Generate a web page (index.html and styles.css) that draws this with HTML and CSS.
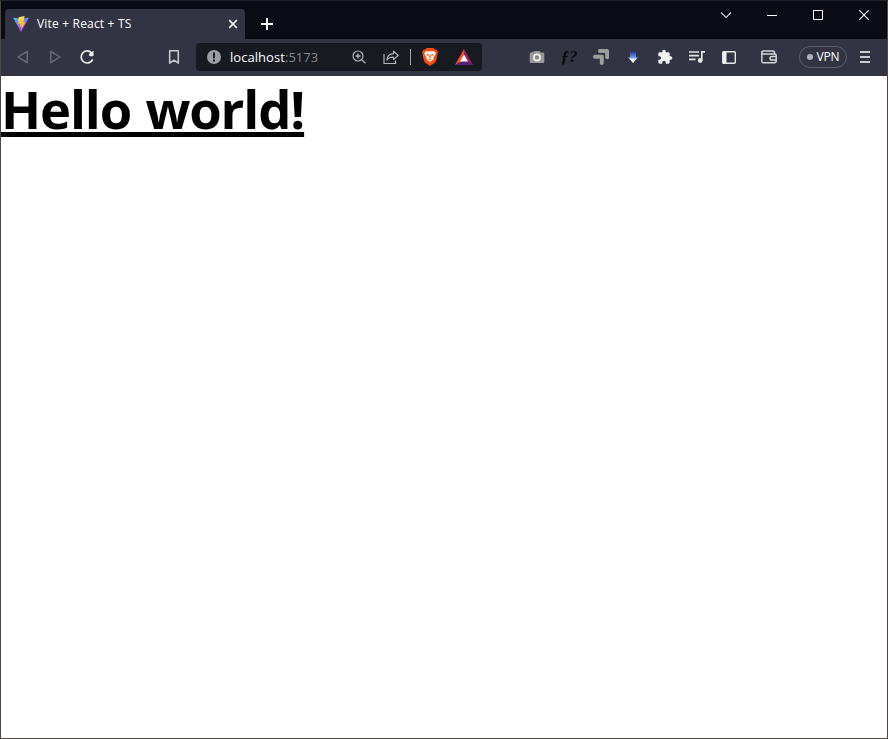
FILE: index.html
```html
<!DOCTYPE html>
<html lang="en">
<head>
<meta charset="utf-8">
<title>Vite + React + TS</title>
<link rel="stylesheet" href="styles.css">
</head>
<body>
<div class="window">
  <header class="titlebar">
    <div class="tab">
      <svg class="favicon" width="18" height="18" viewBox="0 0 18 18">
        <defs>
          <linearGradient id="vite" x1="0" y1="0" x2=".6" y2="1"><stop offset="0" stop-color="#41c8ff"/><stop offset="1" stop-color="#b52cff"/></linearGradient>
          <linearGradient id="bolt" x1="0" y1="0" x2="0" y2="1"><stop offset="0" stop-color="#ffe257"/><stop offset="1" stop-color="#ffa800"/></linearGradient>
        </defs>
        <path d="M1 2.5 9 4l8-1.5-8 14.8z" fill="url(#vite)"/>
        <path d="m12.6 1-6 1.2-.5 6.8 2.3-.4-.6 3.2 1.7-.5-.6 3.8 4.6-8-2.1.3z" fill="url(#bolt)"/>
      </svg>
      <span class="tab-title">Vite + React + TS</span>
      <svg class="tab-close" width="10" height="10" viewBox="0 0 10 10"><path d="m1.2 1.2 7.6 7.6m0-7.6L1.2 8.8" stroke="#f2f2f5" stroke-width="1.7"/></svg>
    </div>
    <svg class="new-tab" width="12" height="12" viewBox="0 0 12 12"><path d="M0 6h12M6 0v12" stroke="#fff" stroke-width="2"/></svg>
    <div class="controls">
      <span class="control"><svg width="12" height="12" viewBox="0 0 12 12"><path d="m1 3.500 5 5 5-5" fill="none" stroke="#d4d4d8" stroke-width="1.100"/></svg></span>
      <span class="control"><svg width="10" height="10" viewBox="0 0 10 10"><path d="M0 5.5h10" stroke="#fff"/></svg></span>
      <span class="control"><svg width="10" height="10" viewBox="0 0 10 10"><path d="M.5.5h9v9h-9z" fill="none" stroke="#fff"/></svg></span>
      <span class="control"><svg width="10" height="10" viewBox="0 0 10 10"><path d="m.2.2 9.6 9.6m0-9.6L.2 9.8" stroke="#fff" stroke-width="1.1"/></svg></span>
    </div>
  </header>

  <nav class="toolbar">
    <span class="slot"><svg width="16" height="16" viewBox="0 0 16 16"><path d="M12.2 2.3v11.4L3 8z" fill="none" stroke="#6b6d7c" stroke-width="1.4" stroke-linejoin="round"/></svg></span>
    <span class="slot"><svg width="16" height="16" viewBox="0 0 16 16"><path d="M3.8 2.3v11.4L13 8z" fill="none" stroke="#6b6d7c" stroke-width="1.4" stroke-linejoin="round"/></svg></span>
    <span class="slot"><svg width="16" height="16" viewBox="0 0 16 16"><path d="M13.700 10.300a6 6 0 1 1-1.200-6.500" fill="none" stroke="#ededf0" stroke-width="1.700"/><path d="M10.200 4.800 14.500 1.800v4.400c0 .6-.4 1-1 1h-2.300c-.8 0-1.200-.6-1.200-1.200z" fill="#ededf0"/></svg></span>
    <span class="slot bookmark"><svg width="16" height="16" viewBox="0 0 16 16"><path d="M3.700 1.800h8.600v12.400L8 11.200l-4.300 3z" fill="none" stroke="#c8c8cb" stroke-width="1.600" stroke-linejoin="round"/></svg></span>

    <div class="address">
      <span class="slot"><svg width="14" height="14" viewBox="0 0 14 14"><circle cx="7" cy="7" r="7" fill="#9b9da5"/><path d="M7 2.5v5.700M7 9.600v2" stroke="#17191f" stroke-width="2"/></svg></span>
      <span class="url">localhost<span class="port">:5173</span></span>
      <span class="slot"><svg width="16" height="16" viewBox="0 0 16 16"><g fill="none" stroke="#b1b3b8" stroke-width="1.200"><circle cx="7" cy="7" r="5"/><path d="m10.700 10.700 3.800 3.500"/><path d="M4.500 7h5M7 4.500v5" stroke-width="1.400"/></g></svg></span>
      <span class="slot"><svg width="16" height="16" viewBox="0 0 16 16"><path d="M1 5v9.500h11.500v-3M10.500 2.200 15.200 6.500l-4.700 4V8.200c-3 0-5.100.7-6.500 2.700.2-3.800 3-6 6.500-6.200z" fill="none" stroke="#b1b3b8" stroke-width="1.200" stroke-linejoin="round"/></svg></span>
      <span class="divider"></span>
      <span class="slot brave"><svg width="16" height="18" viewBox="0 0 16 18"><path d="M4.600 0h6.800l1.400 1.500 1.800.2L16 4.200l-.5 1.600-1.300 6.400c-.3 1.200-.9 2-1.800 2.700L8 18l-4.400-3.100c-.9-.7-1.500-1.500-1.800-2.700L.5 5.800 0 4.200l1.400-2.500 1.800-.2z" fill="#fb4c0c"/><path d="m4 3 2.300.4L8 3l1.700.4L12 3l1.800 2.400-1 2.200-1.600 2.300.3 1.500-2.200 1.400L8 14.200l-1.300-1.400-2.200-1.400.3-1.500-1.600-2.300-1-2.200z" fill="#fff"/><path d="m4.100 5.800 2.700.4-.5 2.200zm7.800 0-2.700.4.500 2.200zM5.700 10.200 8 11.100l2.300-.9L8 12.300zM7.400 7h1.200L8.800 9.400 8 10l-.8-.6z" fill="#fb4c0c"/></svg></span>
      <span class="slot"><svg width="18" height="16" viewBox="0 0 18 16"><path d="M9 0 0 16l9-5z" fill="#ff4b22"/><path d="m9 0 9 16-9-5z" fill="#9e1f63"/><path d="M0 16h18l-9-5z" fill="#4d2678"/><path d="m9 5.500 4 7H5z" fill="#fff"/></svg></span>
    </div>

    <div class="extensions">
      <span class="slot"><svg width="16" height="16" viewBox="0 0 16 16"><path d="M2 3.600h.7V2.700h2v.9L5.500 2h5L12 3.600h2q1.300 0 1.300 1.300v7.800q0 1.300-1.300 1.300H2Q.7 14 .7 12.700V4.900Q.7 3.600 2 3.600z" fill="#989898"/><circle cx="8" cy="8.400" r="4" fill="#ededed"/><circle cx="8" cy="8.400" r="2.200" fill="#888"/></svg></span>
      <span class="slot fx">ƒ?</span>
      <span class="slot"><svg width="16" height="16" viewBox="0 0 16 16"><path d="M6.800 0H14q2 0 2 2v6.800q0 1.400-1.600 1.400T12.200 9V4h-5.400Q4.900 3.900 4.900 2T6.800 0z" fill="#9c9c9c"/><path d="M1.900 5.800h6.900q2 0 2 2v6.500q0 1.600-2 1.600t-2-1.600V9.800H1.900Q0 9.700 0 7.800t1.900-2z" fill="#9c9c9c"/></svg></span>
      <span class="slot"><svg width="12" height="14" viewBox="0 0 12 14"><defs><linearGradient id="arrow" x1="0" y1="0" x2="0" y2="1"><stop offset="0" stop-color="#1c3792"/><stop offset=".5" stop-color="#6d91ee"/><stop offset=".7" stop-color="#f4f6ff"/><stop offset="1" stop-color="#fff"/></linearGradient></defs><path d="M3 1.500h6v5.700h2L6 13 1 7.200h2z" fill="url(#arrow)"/></svg></span>
      <span class="slot"><svg width="16" height="16" viewBox="0 0 24 24"><path d="M20.500 11H19V7c0-1.100-.9-2-2-2h-4V3.500a2.500 2.500 0 0 0-5 0V5H4c-1.100 0-2 .9-2 2v3.800h1.500a2.700 2.700 0 0 1 0 5.400H2V20c0 1.100.9 2 2 2h3.800v-1.500a2.700 2.700 0 0 1 5.400 0V22H17c1.100 0 2-.9 2-2v-4h1.500a2.500 2.500 0 0 0 0-5z" fill="#f1f1f3"/></svg></span>
      <span class="slot"><svg width="16" height="14" viewBox="0 0 16 14"><path d="M0 2h10M0 5.700h10M0 9.400h6.500" stroke="#e5e5e8" stroke-width="1.700"/><path d="M12.800 10V1.800H16" fill="none" stroke="#e5e5e8" stroke-width="1.700"/><circle cx="11.200" cy="10.500" r="2.400" fill="#e5e5e8"/></svg></span>
      <span class="slot"><svg width="14" height="13" viewBox="0 0 14 13"><rect x=".7" y=".7" width="12.600" height="11.600" rx="1" fill="none" stroke="#e5e5e8" stroke-width="1.400"/><path d="M1 1h3.500v11H1z" fill="#f1f1f3"/></svg></span>
    </div>
    <span class="slot wallet"><svg width="16" height="14" viewBox="0 0 16 14"><g fill="none" stroke="#d5d5d8" stroke-width="1.500"><path d="M13.500 4V2.500q0-1.500-1.500-1.500H2.500Q.8 1 .8 2.500v8.700q0 1.600 1.700 1.600h10.800q1.900 0 1.900-1.700V5.600q0-1.700-1.700-1.700H2.500Q.8 3.900.8 2.400"/><path d="M15.200 6.500H11q-2 0-2 1.800t2 1.800h4.200"/></g></svg></span>
    <span class="vpn"><span class="dot"></span>VPN</span>
    <span class="slot menu"><svg width="10" height="12" viewBox="0 0 10 12"><path d="M0 1h10M0 6h10M0 11h10" stroke="#cacacd" stroke-width="2"/></svg></span>
  </nav>

  <main class="page"><h1>Hello world!</h1></main>
</div>
</body>
</html>
```

FILE: styles.css
```css
* { box-sizing: border-box; }
body { margin: 0; background: #fff; font-family: "Open Sans", "Noto Sans", sans-serif; }
svg { display: block; flex: none; }

.window {
  height: 739px;
  border: 1px solid #504642;
  border-top-color: #202126;
  display: flex;
  flex-direction: column;
  overflow: hidden;
}

.titlebar {
  height: 38px;
  flex: none;
  display: flex;
  align-items: flex-start;
  background: #0a0b14;
}
.tab {
  width: 240px;
  height: 30px;
  margin: 8px 0 0 4px;
  padding: 0 7px 0 7px;
  display: flex;
  align-items: center;
  background: #323443;
  border-radius: 4px 4px 0 0;
}
.tab-title {
  margin-left: 7px;
  color: #fff;
  font-size: 12px;
  font-weight: 500;
  line-height: 16px;
  letter-spacing: 0.18px;
  white-space: nowrap;
  flex: 1;
}
.new-tab { margin: 17px 0 0 16px; }
.controls { display: flex; margin-left: auto; }
.control {
  width: 46px;
  height: 28px;
  display: flex;
  align-items: center;
  justify-content: center;
}

.toolbar {
  height: 37px;
  flex: none;
  padding: 0 6px;
  display: flex;
  align-items: center;
  background: #323443;
  border-bottom: 1px solid #352f3e;
}
.slot {
  width: 32px;
  flex: none;
  display: flex;
  align-items: center;
  justify-content: center;
}
.bookmark { margin-left: 55px; }
.address {
  width: 286px;
  height: 28px;
  margin-left: 6px;
  padding: 0 2px;
  display: flex;
  align-items: center;
  background: #171a20;
  border-radius: 4px;
}
.url {
  flex: 1;
  color: #fff;
  font-size: 13px;
  line-height: 18px;
  letter-spacing: 0.05px;
  white-space: nowrap;
}
.port { color: #85888d; }
.divider {
  width: 1px;
  height: 16px;
  margin: 0 3px;
  background: #a4a5a8;
}
.brave { margin-right: 2px; }
.extensions { display: flex; align-items: center; margin-left: 39px; }
.fx {
  color: #08090c;
  font: italic bold 17px/18px "Liberation Serif", serif;
}
.wallet { margin-left: 8px; }
.vpn {
  width: 48px;
  height: 22px;
  margin-left: 14px;
  display: flex;
  align-items: center;
  justify-content: center;
  gap: 4px;
  border: 1px solid #5b5e71;
  border-radius: 11px;
  color: #fff;
  font-size: 12px;
  line-height: 16px;
  letter-spacing: -0.2px;
}
.dot { width: 6px; height: 6px; border-radius: 50%; background: #aeb1c2; }
.menu { margin-left: 2px; }

.page { flex: 1; background: #fff; }
h1 {
  display: inline-block;
  margin: 0;
  color: #000;
  font-size: 52.5px;
  font-weight: 700;
  line-height: 66px;
  letter-spacing: -1.15px;
  word-spacing: 2px;
  white-space: nowrap;
  text-decoration: underline;
  text-decoration-thickness: 5px;
  text-underline-offset: 3px;
  text-decoration-skip-ink: none;
}
```
